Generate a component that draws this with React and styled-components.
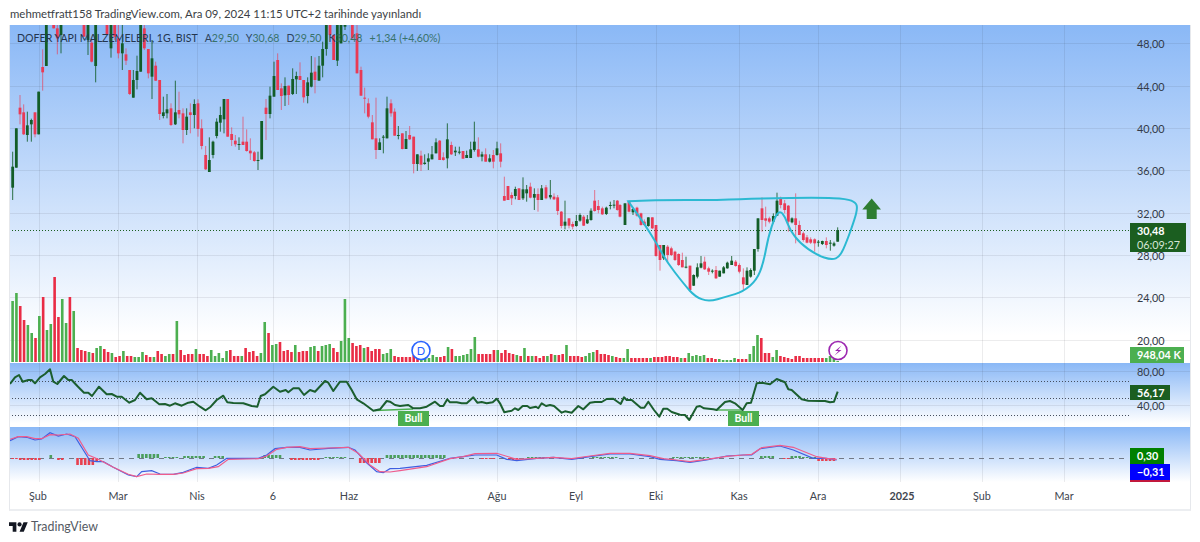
import React from "react";
import styled, { createGlobalStyle } from "styled-components";

const GlobalStyle = createGlobalStyle`
  html, body {
    margin: 0;
    padding: 0;
    background: #ffffff;
  }
`;

const Page = styled.div`
  width: 1200px;
  height: 542px;
  overflow: hidden;
  display: flex;
  flex-direction: column;
  font-family: "Lato", "Noto Sans", sans-serif;
`;

const Caption = styled.div`
  height: 25px;
  padding-left: 10px;
  line-height: 28px;
  font-size: 11.4px;
  color: #3c3f46;
  white-space: nowrap;
`;

const Frame = styled.div`
  width: 1182px;
  margin-left: 9px;
  border-right: 1px solid #e6e8ec;
  border-left: 1px solid #e6e8ec;
  border-bottom: 2px solid #eceef1;
  box-sizing: border-box;
  display: flex;
  flex-direction: column;
`;

const Pane = styled.div`
  position: relative;
  height: ${(p) => p.$height}px;
  margin-bottom: ${(p) => p.$gap || 0}px;
  background: linear-gradient(#8ab8f6, #ffffff ${(p) => p.$fade}%);
  svg {
    display: block;
  }
`;

const Legend = styled.div`
  position: absolute;
  left: 7px;
  top: 5px;
  display: flex;
  gap: 7px;
  font-size: 10.6px;
  line-height: 17px;
  color: #24364f;
  white-space: nowrap;
`;

const Value = styled.span`
  color: #2f6b5c;
  opacity: 0.9;
  b {
    font-weight: 400;
    color: #24364f;
  }
`;

const PriceLabel = styled.div`
  position: absolute;
  left: 1127px;
  top: ${(p) => p.$y}px;
  transform: translateY(-50%);
  font-size: 10.8px;
  color: #333a47;
`;

const Tag = styled.div`
  position: absolute;
  left: 1120px;
  top: ${(p) => p.$y}px;
  width: ${(p) => p.$w}px;
  height: ${(p) => p.$h}px;
  background: ${(p) => p.$bg};
  color: #ffffff;
  font-size: 10.8px;
  font-weight: 700;
  line-height: 15px;
  padding-left: 7px;
  box-sizing: border-box;
  white-space: nowrap;
`;

const Countdown = styled.div`
  font-weight: 400;
  font-size: 10.8px;
  line-height: 13px;
  color: #d5e6d6;
`;

const TagStrip = styled.div`
  position: absolute;
  left: 1120px;
  top: 53px;
  width: 40px;
  height: 2px;
  background: #c2183c;
`;

const BullTag = styled.div`
  position: absolute;
  left: ${(p) => p.$x}px;
  top: 48px;
  width: 31px;
  height: 15px;
  background: #4caf50;
  color: #ffffff;
  font-size: 10.5px;
  font-weight: 700;
  line-height: 15px;
  text-align: center;
`;

const TimeAxis = styled.div`
  position: relative;
  height: 27px;
`;

const TimeLabel = styled.span`
  position: absolute;
  left: ${(p) => p.$x - 10}px;
  top: 7px;
  transform: translateX(-50%);
  font-size: 10.8px;
  font-weight: ${(p) => (p.$strong ? 700 : 400)};
  color: #41464f;
`;

const Footer = styled.div`
  display: flex;
  align-items: center;
  gap: 3px;
  height: 31px;
  padding-left: 9px;
  font-size: 12.4px;
  color: #555a63;
`;

// candles read off the chart: [x, bodyTop, bodyBottom, high, low, green]
const part = (ox, oy, rows) =>
  rows.map(([x, t, b, h, l, c]) => ({
    x: ox + x / 3,
    t: oy + t / 3,
    b: oy + b / 3,
    h: oy + h / 3,
    l: oy + l / 3,
    c,
  }));

const candles = [
  ...part(0, 20, [
    [38, 440, 503, 395, 540, 1], [49, 325, 443, 325, 443, 1], [60, 263, 283, 225, 313, 0], [71, 277, 343, 253, 345, 0],
    [82, 316, 345, 275, 365, 1], [94, 300, 313, 296, 365, 1], [105, 277, 343, 277, 352, 0], [116, 215, 343, 215, 343, 1],
    [128, 141, 157, 88, 212, 0], [139, 15, 138, 15, 138, 1], [161, 15, 25, 15, 25, 0], [172, 25, 55, 15, 103, 0],
    [183, 15, 45, 15, 100, 1], [252, 15, 50, 15, 50, 0], [264, 15, 60, 15, 105, 1], [275, 68, 125, 60, 127, 0],
    [287, 15, 138, 15, 187, 1], [321, 15, 45, 15, 45, 0], [333, 15, 85, 15, 113, 1], [344, 15, 50, 15, 60, 0],
    [355, 55, 100, 15, 115, 0], [367, 70, 100, 15, 150, 1], [378, 103, 122, 85, 135, 0], [389, 150, 222, 150, 225, 0],
    [400, 180, 233, 150, 233, 1], [411, 153, 180, 107, 208, 1], [422, 15, 155, 15, 155, 1], [433, 25, 85, 15, 90, 0],
    [445, 87, 160, 87, 175, 0], [456, 115, 170, 60, 237, 1], [467, 137, 182, 125, 183, 0], [479, 180, 282, 180, 300, 0],
    [490, 277, 288, 230, 295, 1], [501, 268, 280, 222, 295, 1], [513, 265, 315, 250, 318, 0], [526, 277, 313, 182, 315, 1],
    [537, 270, 283, 215, 295, 0], [549, 280, 330, 265, 370, 0], [560, 290, 330, 265, 345, 1], [571, 277, 285, 250, 340, 0],
    [583, 252, 285, 238, 325, 1], [594, 250, 327, 238, 350, 0], [605, 325, 378, 298, 388, 0], [617, 405, 448, 378, 450, 0],
    [628, 420, 456, 352, 456, 1], [639, 365, 405, 362, 415, 1], [650, 305, 348, 295, 355, 1], [661, 285, 308, 260, 335, 1],
    [672, 237, 298, 237, 340, 1], [683, 237, 350, 237, 350, 0], [695, 342, 360, 322, 378, 0], [706, 362, 373, 345, 380, 0],
    [717, 372, 374, 352, 390, 1], [729, 365, 375, 290, 375, 0], [740, 365, 393, 328, 395, 0], [751, 392, 400, 355, 420, 0],
    [763, 397, 423, 393, 425, 0], [774, 420, 422, 395, 450, 1],
  ]),
  ...part(260, 20, [
    [5, 303, 418, 303, 418, 1], [18, 263, 282, 237, 360, 0], [30, 227, 282, 200, 295, 1], [42, 168, 230, 125, 230, 1],
    [53, 120, 210, 100, 210, 0], [64, 205, 228, 190, 270, 0], [75, 198, 226, 172, 258, 1], [86, 197, 225, 197, 255, 0],
    [98, 177, 222, 145, 225, 1], [109, 168, 178, 155, 222, 1], [120, 168, 180, 127, 180, 0], [131, 180, 232, 180, 248, 0],
    [143, 187, 228, 172, 250, 1], [154, 158, 200, 108, 202, 1], [165, 155, 180, 112, 220, 0], [177, 137, 182, 108, 182, 1],
    [188, 87, 137, 65, 172, 1], [199, 15, 87, 15, 107, 1], [210, 15, 45, 15, 50, 0], [221, 45, 120, 45, 120, 0],
    [232, 15, 122, 15, 138, 1], [243, 15, 70, 15, 70, 1], [255, 15, 20, 15, 30, 1], [277, 15, 55, 15, 55, 0],
    [291, 40, 160, 15, 160, 0], [303, 150, 227, 140, 228, 0], [314, 233, 235, 203, 280, 0], [325, 250, 290, 235, 295, 0],
    [337, 307, 358, 285, 358, 0], [348, 355, 390, 233, 417, 0], [359, 367, 390, 355, 390, 1], [370, 350, 352, 345, 400, 1],
    [381, 265, 355, 230, 355, 1], [393, 250, 280, 238, 290, 0], [404, 275, 347, 265, 347, 0], [415, 345, 347, 318, 358, 1],
    [427, 340, 387, 340, 388, 0], [438, 357, 387, 333, 387, 1], [449, 345, 358, 318, 360, 0], [461, 350, 432, 350, 460, 0],
    [472, 403, 432, 403, 453, 1], [483, 407, 434, 392, 453, 0], [494, 428, 432, 403, 434, 1], [505, 415, 425, 400, 450, 1],
    [516, 403, 418, 378, 418, 1], [528, 367, 400, 355, 400, 1], [539, 362, 420, 360, 420, 0], [550, 412, 420, 397, 422, 0],
    [562, 358, 415, 310, 445, 1], [574, 375, 403, 365, 405, 0], [586, 392, 397, 380, 408, 1], [598, 395, 397, 380, 403, 1],
    [609, 393, 416, 393, 416, 0], [620, 405, 414, 392, 414, 1], [632, 388, 414, 365, 414, 1], [643, 365, 390, 305, 395, 1],
    [655, 388, 410, 352, 412, 0], [666, 403, 410, 395, 424, 1], [677, 403, 425, 385, 425, 0], [689, 415, 425, 403, 427, 1],
    [700, 405, 425, 390, 445, 0], [711, 385, 405, 365, 407, 1], [722, 400, 425, 370, 442, 0],
  ]),
  ...part(490, 160, [
    [43, 108, 122, 50, 122, 0], [54, 78, 120, 78, 120, 0], [65, 105, 115, 97, 135, 0], [76, 87, 108, 80, 118, 1],
    [87, 85, 120, 85, 120, 0], [99, 88, 115, 52, 120, 1], [110, 88, 100, 75, 125, 1], [121, 80, 113, 68, 115, 0],
    [133, 102, 113, 85, 150, 1], [144, 102, 120, 85, 155, 0], [155, 85, 120, 75, 120, 1], [168, 82, 115, 75, 118, 0],
    [181, 105, 112, 60, 118, 1], [192, 110, 118, 100, 120, 0], [203, 112, 153, 105, 165, 0], [214, 155, 198, 153, 205, 0],
    [225, 185, 197, 122, 208, 1], [237, 175, 197, 175, 205, 0], [248, 192, 200, 185, 208, 0], [259, 183, 198, 165, 200, 1],
    [270, 165, 182, 160, 185, 1], [281, 170, 197, 165, 198, 0], [292, 178, 190, 165, 192, 1], [303, 152, 180, 145, 182, 1],
    [314, 122, 153, 90, 155, 0], [325, 138, 150, 120, 160, 0], [337, 145, 163, 140, 165, 0], [349, 143, 162, 140, 165, 1],
    [361, 135, 137, 125, 148, 1], [372, 134, 137, 120, 145, 1], [382, 122, 150, 120, 152, 0],
  ]),
  ...part(620, 180, [
    [0, 75, 110, 72, 112, 0], [15, 70, 135, 70, 135, 1], [27, 65, 95, 62, 97, 0], [39, 87, 97, 82, 105, 1],
    [51, 83, 107, 80, 110, 0], [63, 100, 135, 98, 137, 0], [73, 125, 135, 118, 137, 0], [85, 112, 138, 112, 140, 1],
    [97, 112, 145, 112, 147, 0], [108, 135, 228, 135, 230, 0], [120, 195, 240, 195, 272, 0], [131, 195, 235, 195, 240, 1],
    [143, 200, 225, 195, 245, 0], [154, 205, 225, 200, 228, 0], [165, 215, 240, 212, 243, 0], [176, 222, 255, 220, 258, 0],
    [187, 240, 262, 218, 262, 0], [198, 260, 263, 230, 265, 1], [210, 257, 330, 257, 335, 0], [221, 285, 317, 283, 318, 1],
    [232, 262, 290, 250, 295, 1], [243, 250, 263, 228, 265, 1], [254, 245, 268, 230, 270, 0], [266, 265, 275, 260, 285, 0],
    [277, 272, 275, 268, 280, 1], [288, 270, 295, 258, 297, 0], [299, 272, 290, 272, 290, 1], [311, 262, 280, 258, 280, 1],
    [322, 248, 265, 245, 266, 1], [335, 242, 255, 228, 255, 1], [347, 245, 258, 240, 260, 0], [358, 255, 275, 250, 280, 0],
    [370, 292, 313, 265, 330, 0], [381, 272, 315, 262, 315, 1], [392, 270, 290, 265, 293, 1], [403, 207, 272, 207, 285, 1],
    [414, 115, 207, 115, 215, 1], [426, 85, 120, 52, 155, 0], [437, 115, 122, 80, 140, 0], [448, 115, 125, 110, 130, 0],
    [460, 108, 125, 100, 130, 1], [471, 62, 107, 38, 107, 1], [482, 57, 75, 50, 85, 0], [494, 70, 90, 60, 100, 0],
    [505, 77, 125, 75, 155, 0], [516, 115, 127, 112, 130, 1], [527, 115, 135, 40, 190, 0], [538, 135, 165, 122, 165, 0],
    [550, 160, 180, 155, 185, 0], [561, 172, 188, 165, 190, 0], [572, 178, 188, 172, 192, 0], [584, 178, 190, 175, 215, 0],
    [595, 185, 187, 180, 200, 1], [607, 183, 192, 182, 195, 1], [619, 183, 195, 172, 205, 0], [631, 188, 190, 180, 212, 1],
    [642, 190, 197, 185, 200, 1], [653, 150, 185, 142, 185, 1],
  ]),
];

// volume in px, negative for a red bar
const volume = [
  61, 69, -56, -42, 37, 29, -24, 46, -65, 32, 38, -85, -45, 63, 39, -65, 51, -14, -12, -11, 10, -9, 14, 16, -13, -10, 9, -5, -6, 11,
  -6, -6, 5, 5, 10, -7, -5, 5, -11, -8, 6, 8, -8, 41, -12, -7, -8, -8, 13, -8, -8, -6, 12, 6, 9, 4, 11, -12, -6, -6, 6, -14, -10, -11,
  -6, 9, 40, -29, 17, 18, -20, -11, -12, -10, 17, -10, -11, -11, 15, 16, -11, 16, 17, 18, -14, -10, 21, 63, 24, -19, -16, -17, 14, -15,
  -11, -13, -13, 8, 9, 13, -6, -5, -5, -5, -5, -7, -7, 5, 4, 4, 7, 5, -5, -6, 15, -13, 6, 6, 7, 8, 13, 25, -8, -8, -8, -8, -12, 12, -9,
  -12, -9, -8, 7, -6, 14, -6, 6, -6, -4, -6, 6, -8, 7, -7, -8, 17, -6, -6, -6, -5, 6, 9, 10, -12, -8, -8, -7, 6, -5, -4, 4, 13, -4, -4,
  -4, -4, -4, 4, -5, -5, -5, -6, -6, -5, -5, 4, -4, 9, 6, 7, 6, 7, -4, -4, -3, 3, 2, 2, 2, 4, -3, -3, -3, 8, 16, 27, -24, -9, -9, 5, 12,
  -6, -5, -4, -3, -6, -6, -4, -4, -4, -4, -4, -4, 4, 6, 4, 1,
];

const macdHist = [
  [10, 18, -1], [18, 43, -2], [47, 53, 3], [55, 64, -2], [74, 93, -7], [93, 100, -4], [135, 158, 4], [162, 178, 1],
  [183, 205, 2], [215, 226, 2], [262, 280, 3], [288, 320, -2], [325, 345, 1], [358, 380, -5], [385, 447, 3],
  [482, 494, -1], [507, 520, -2], [527, 550, 1], [593, 617, 1], [672, 710, 1], [760, 775, 2], [790, 800, 2], [800, 815, 1], [838, 840, 3],
  [783, 790, -1], [820, 832, -3], [800, 836, -3],
];

const rsiLine = [
  ...[
    [30, 132], [45, 112], [57, 105], [68, 125], [85, 120], [95, 120], [105, 130], [120, 112], [135, 102], [150, 88], [160, 125], [172, 132],
    [192, 108], [205, 120], [215, 120], [232, 138], [252, 158], [265, 158], [276, 168], [297, 140], [320, 163], [335, 162], [350, 170],
    [365, 170], [388, 188], [405, 180], [420, 158], [440, 178], [455, 175], [478, 193], [495, 192], [510, 197], [525, 190], [545, 197],
    [565, 188], [580, 185], [600, 200], [617, 211], [632, 200], [650, 180], [670, 167], [682, 187], [700, 189], [730, 190], [755, 198],
    [772, 200], [782, 168], [795, 163], [820, 140], [840, 155], [857, 150], [865, 157], [880, 145], [897, 145], [912, 165], [930, 150],
    [945, 155], [975, 123], [985, 128], [1000, 153], [1020, 125], [1040, 125], [1055, 150], [1070, 178], [1090, 190], [1120, 212],
    [1140, 208], [1160, 183], [1170, 185], [1185, 195], [1200, 198], [1225, 195], [1240, 205], [1260, 205], [1280, 200], [1305, 185],
    [1320, 198], [1330, 198], [1342, 178],
  ].map(([x, y]) => [x / 3, 340 + y / 3]),
  ...[
    [0, 187], [20, 187], [35, 190], [50, 190], [70, 172], [82, 188], [95, 186], [110, 190], [128, 187], [140, 176], [150, 190], [163, 217],
    [185, 212], [195, 205], [205, 210], [218, 198], [232, 198], [240, 204], [258, 200], [265, 205], [275, 190], [288, 198], [300, 195],
    [312, 198], [335, 218], [345, 214], [365, 218], [385, 198], [400, 208], [420, 188], [435, 186], [455, 186], [470, 177], [490, 176],
    [512, 192], [522, 172], [530, 180], [545, 180], [572, 203], [583, 203], [595, 185], [612, 210], [628, 230], [640, 206], [652, 206],
    [665, 216], [690, 224], [705, 225], [718, 240], [740, 200], [750, 198], [762, 205], [790, 208], [800, 210], [825, 186], [840, 183],
    [855, 190], [878, 210], [890, 190], [903, 188], [920, 130], [935, 128], [960, 133], [980, 117], [1005, 127], [1015, 148], [1025, 150],
    [1055, 178], [1075, 182], [1110, 183], [1125, 183], [1140, 187], [1152, 185], [1163, 155],
  ].map(([x, y]) => [450 + x / 3, 340 + y / 3]),
];

const toMacd = (left, right) => [
  ...left.map(([x, y]) => [x / 3, 340 + y / 3]),
  ...right.map(([x, y]) => [450 + x / 3, 340 + y / 3]),
];

const macdBlue = toMacd(
  [
    [30, 302], [55, 290], [80, 292], [105, 300], [125, 297], [150, 278], [175, 288], [200, 282], [225, 290], [250, 330], [270, 362], [290, 365],
    [310, 365], [340, 382], [385, 405], [410, 410], [425, 395], [455, 392], [480, 402], [520, 403], [550, 397], [590, 382], [625, 385],
    [650, 375], [680, 355], [775, 355], [800, 345], [825, 326], [860, 322], [900, 322], [930, 330], [985, 325], [1045, 322], [1065, 330],
    [1100, 368], [1130, 395], [1150, 398], [1170, 386], [1200, 385], [1280, 376],
  ],
  [
    [0, 355], [40, 350], [75, 345], [140, 345], [170, 358], [200, 362], [260, 355], [310, 352], [365, 358], [420, 350], [480, 342], [540, 342],
    [600, 350], [630, 358], [680, 362], [720, 367], [770, 360], [830, 348], [880, 345], [905, 345], [930, 326], [990, 318], [1030, 330],
    [1090, 355], [1130, 355], [1160, 360],
  ]
);

const macdPink = toMacd(
  [
    [30, 298], [55, 290], [80, 290], [105, 296], [125, 296], [150, 284], [175, 285], [210, 282], [235, 295], [265, 345], [295, 358], [340, 382],
    [385, 403], [410, 410], [440, 402], [480, 403], [520, 403], [550, 399], [590, 386], [625, 385], [655, 380], [685, 358], [775, 356],
    [800, 348], [830, 328], [860, 322], [900, 320], [930, 326], [985, 324], [1045, 322], [1075, 340], [1110, 375], [1140, 395], [1170, 396],
    [1200, 392], [1280, 380],
  ],
  [
    [0, 356], [40, 350], [75, 341], [140, 340], [180, 352], [200, 358], [260, 355], [310, 352], [365, 356], [420, 348], [480, 340], [540, 340],
    [600, 347], [640, 356], [680, 360], [720, 365], [770, 358], [830, 349], [880, 345], [905, 343], [935, 323], [990, 316], [1030, 322],
    [1100, 350], [1130, 355], [1160, 358],
  ]
);

const cup = [
  [25, 64], [100, 60], [300, 60], [420, 55], [600, 53], [680, 56], [708, 68], [712, 85], [705, 115], [680, 185], [660, 230], [635, 240], [590, 225],
  [540, 190], [510, 150], [495, 110], [480, 92], [465, 110], [445, 170], [430, 250], [410, 300], [370, 335], [320, 350], [265, 365], [225, 350],
  [190, 310], [140, 245], [110, 190], [75, 135], [40, 85],
].map(([x, y]) => [620 + x / 3, 180 + y / 3]);

const points = (list) => list.map(([x, y]) => `${x.toFixed(1)},${y.toFixed(1)}`).join(" ");

const smooth = (list) => {
  let d = `M${list[0][0]} ${list[0][1]}`;
  for (let i = 1; i < list.length - 1; i++) {
    const mx = (list[i][0] + list[i + 1][0]) / 2;
    const my = (list[i][1] + list[i + 1][1]) / 2;
    d += ` Q${list[i][0]} ${list[i][1]} ${mx} ${my}`;
  }
  return d;
};

const monthLines = [39, 118, 197, 273, 349, 497, 576, 656, 739, 818, 900, 982, 1064];
const months = [
  ["Şub", 38], ["Mar", 118], ["Nis", 197], ["6", 273], ["Haz", 349], ["Ağu", 497], ["Eyl", 576], ["Eki", 656], ["Kas", 739], ["Ara", 818],
  ["2025", 902, true], ["Şub", 982], ["Mar", 1064],
];
const priceTicks = [
  ["48,00", 43], ["44,00", 86], ["40,00", 128], ["36,00", 170], ["32,00", 213], ["28,00", 255], ["24,00", 297], ["20,00", 340],
];

const RED = "#e93a55";
const GREEN = "#125d28";
const barX = (i, total) => 12.6 + (i * (837.7 - 12.6)) / (total - 1);

const GridLines = ({ top, bottom, rows = [] }) => (
  <g stroke="#2a2e39" strokeOpacity="0.09" strokeWidth="1">
    {monthLines.map((x) => (
      <line key={x} x1={x + 0.5} x2={x + 0.5} y1={top} y2={bottom} />
    ))}
    {rows.map((y) => (
      <line key={y} x1="9" x2="1190" y1={y + 0.5} y2={y + 0.5} />
    ))}
  </g>
);

const PaneSvg = ({ top, height, children }) => (
  <svg width="1180" height={height} viewBox={`10 ${top} 1180 ${height}`}>
    {children}
  </svg>
);

const MainChart = () => (
  <PaneSvg top={25} height={338}>
    <GridLines top={25} bottom={363} rows={priceTicks.map((t) => t[1])} />
    <line x1="9" x2="1130" y1="230.5" y2="230.5" stroke="#1b5e20" strokeDasharray="1 2" />
    {volume.map((v, i) => (
      <rect
        key={i}
        x={barX(i, volume.length) - 1.3}
        width="2.6"
        y={362 - Math.abs(v)}
        height={Math.abs(v)}
        fill={v < 0 ? "#e92c45" : "#4caf50"}
      />
    ))}
    {candles.map((c, i) => (
      <g key={i} fill={c.c ? GREEN : RED}>
        <rect x={c.x - 0.5} width="1" y={c.h} height={c.l - c.h} fillOpacity={c.c ? 0.85 : 0.65} />
        <rect x={c.x - 1.4} width="2.8" y={c.t} height={Math.max(c.b - c.t, 1)} />
      </g>
    ))}
    <path d={`${smooth(cup)} Z`} fill="none" stroke="#2cb9d2" strokeWidth="2" />
    <path d="M871.7 198.5 881 209.5 H876.7 V219 H866.7 V209.5 H862.3 Z" fill="#2e7d32" />
    <circle cx="421" cy="350.5" r="9" fill="#ffffff" stroke="#2962ff" strokeWidth="1.6" />
    <text x="421" y="354.5" textAnchor="middle" fontSize="11" fill="#2962ff" fontFamily="Lato, sans-serif">
      D
    </text>
    <circle cx="838" cy="350.5" r="9" fill="#ffffff" stroke="#9c27b0" strokeWidth="1.6" />
    <path d="M841.5 345.5 835 351 H838.5 L834.5 355.5 841.5 350 H838 Z" fill="#9c27b0" />
  </PaneSvg>
);

const RsiChart = () => (
  <PaneSvg top={363} height={63}>
    <GridLines top={363} bottom={426} rows={[371, 405]} />
    {[381.5, 398.5, 415.5].map((y) => (
      <line key={y} x1="9" x2="1129" y1={y} y2={y} stroke="#47505f" strokeDasharray="1 2" />
    ))}
    <line x1="375" x2="413" y1="410.5" y2="409" stroke="#4caf50" strokeWidth="1.4" />
    <line x1="717" x2="743" y1="410" y2="410" stroke="#4caf50" strokeWidth="1.4" />
    <polyline points={points(rsiLine)} fill="none" stroke="#1b5e2f" strokeWidth="2" strokeLinejoin="round" />
  </PaneSvg>
);

const MacdChart = () => (
  <PaneSvg top={427} height={55}>
    <GridLines top={427} bottom={482} />
    <line x1="9" x2="1128" y1="458.5" y2="458.5" stroke="#5a5f69" strokeOpacity="0.8" strokeDasharray="5 5" />
    {volume.map((_, i) => {
      const x = barX(i, volume.length);
      const hit = macdHist.find(([a, b]) => x >= a && x < b);
      if (!hit) return null;
      const v = hit[2];
      return (
        <rect
          key={i}
          x={x - 1.3}
          width="2.6"
          y={v > 0 ? 458 - v : 458}
          height={Math.abs(v)}
          fill={v < 0 ? "#e8404f" : "#4a9e5c"}
        />
      );
    })}
    <polyline points={points(macdBlue)} fill="none" stroke="#3f5fe0" strokeWidth="1.2" />
    <polyline points={points(macdPink)} fill="none" stroke="#ef5c8c" strokeWidth="1.2" />
  </PaneSvg>
);

const Logo = () => (
  <svg width="19" height="15" viewBox="0 0 36 28" fill="#131722">
    <path d="M14 24H7V13H0V6h14v18zM28 24h-8l7.5-18h8L28 24z" />
    <circle cx="20" cy="10" r="4" />
  </svg>
);

const App = () => (
  <Page>
    <GlobalStyle />
    <Caption>mehmetfratt158 TradingView.com, Ara 09, 2024 11:15 UTC+2 tarihinde yayınlandı</Caption>
    <Frame>
      <Pane $height={338} $fade={92}>
        <MainChart />
        <Legend>
          <span>DOFER YAPI MALZEMELERI, 1G, BIST</span>
          <Value><b>A</b>29,50</Value>
          <Value><b>Y</b>30,68</Value>
          <Value><b>D</b>29,50</Value>
          <Value><b>K</b>30,48</Value>
          <Value>+1,34 (+4,60%)</Value>
        </Legend>
        {priceTicks.map(([label, y]) => (
          <PriceLabel key={label} $y={y - 25}>{label}</PriceLabel>
        ))}
        <Tag $y={198} $w={56} $h={29} $bg="#1b5e20">
          30,48
          <Countdown>06:09:27</Countdown>
        </Tag>
        <Tag $y={322} $w={54} $h={16} $bg="#4caf50">948,04 K</Tag>
      </Pane>
      <Pane $height={63} $gap={1} $fade={96}>
        <RsiChart />
        <PriceLabel $y={8}>80,00</PriceLabel>
        <PriceLabel $y={42}>40,00</PriceLabel>
        <BullTag $x={388}>Bull</BullTag>
        <BullTag $x={718}>Bull</BullTag>
        <Tag $y={22} $w={40} $h={15} $bg="#1b5e20">56,17</Tag>
      </Pane>
      <Pane $height={55} $fade={100}>
        <MacdChart />
        <Tag $y={21} $w={34} $h={16} $bg="#008000">0,30</Tag>
        <Tag $y={37} $w={40} $h={16} $bg="#0000ff">−0,31</Tag>
        <TagStrip />
      </Pane>
      <TimeAxis>
        {months.map(([label, x, strong]) => (
          <TimeLabel key={label + x} $x={x} $strong={strong}>{label}</TimeLabel>
        ))}
      </TimeAxis>
    </Frame>
    <Footer>
      <Logo />
      TradingView
    </Footer>
  </Page>
);

export default App;
